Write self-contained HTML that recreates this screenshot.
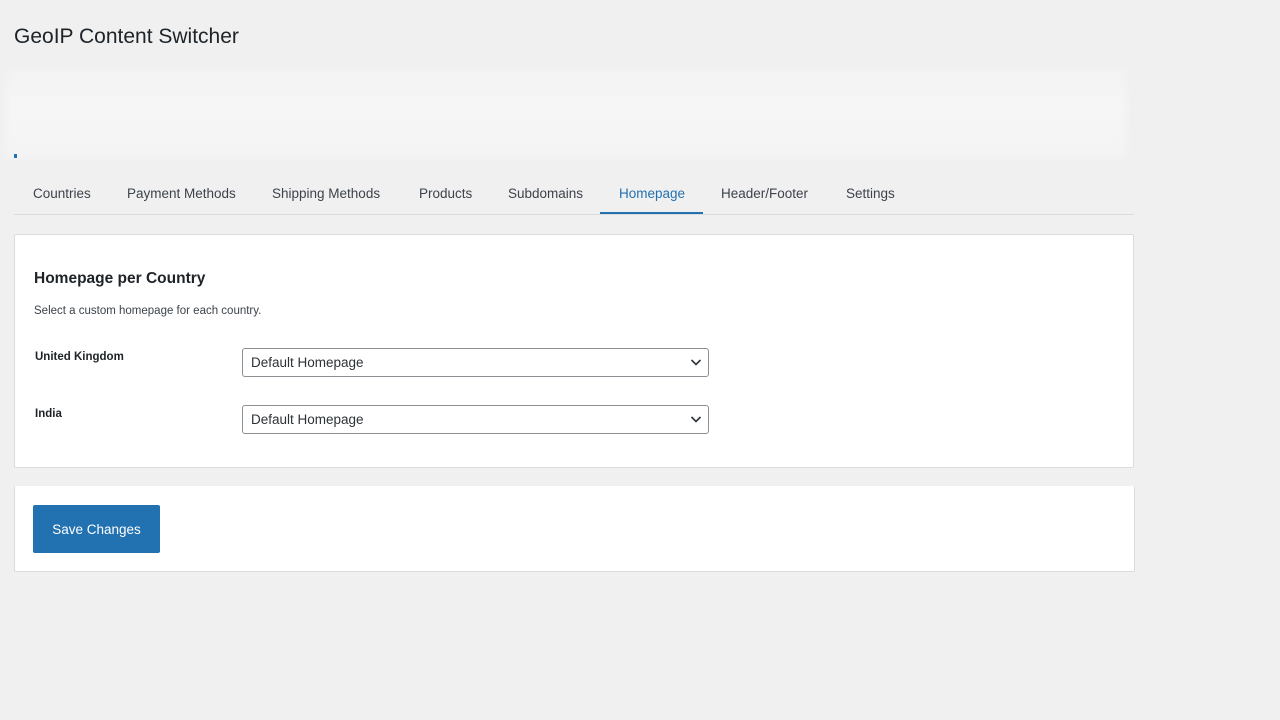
<!DOCTYPE html>
<html><head><meta charset="utf-8"><style>
body{margin:0;width:1280px;height:720px;background:#f0f0f1;font-family:"Liberation Sans",sans-serif;color:#1d2327;position:relative;overflow:hidden}
.a{position:absolute;white-space:nowrap}
.tab{position:absolute;top:186px;font-size:13.5px;color:#3c434a}
.sel{position:absolute;left:242px;width:465px;height:27px;border:1px solid #8c8f94;border-radius:3px;background:#fff;font-size:13.5px;color:#2c3338}
.sel span{position:absolute;left:8px;top:6px}
.sel svg{position:absolute;right:6px;top:8px}
</style></head><body>
<div class="a" style="left:14px;top:25px;font-size:21px;color:#1d2327">GeoIP Content Switcher</div>
<div class="a" style="left:6px;top:68px;width:1120px;height:90px;background:linear-gradient(180deg,#f2f2f2,#f6f6f6 40%,#f4f4f4);filter:blur(4px)"></div>
<div class="a" style="left:14px;top:154px;width:3px;height:4px;background:#2271b1"></div>
<div class="tab" style="left:33px">Countries</div>
<div class="tab" style="left:127px">Payment Methods</div>
<div class="tab" style="left:272px">Shipping Methods</div>
<div class="tab" style="left:419px">Products</div>
<div class="tab" style="left:508px">Subdomains</div>
<div class="tab" style="left:619px;color:#2271b1">Homepage</div>
<div class="tab" style="left:721px">Header/Footer</div>
<div class="tab" style="left:846px">Settings</div>
<div class="a" style="left:14px;top:214px;width:1120px;height:1px;background:#dcdcde"></div>
<div class="a" style="left:600px;top:212px;width:103px;height:2px;background:#2271b1"></div>
<div class="a" style="left:14px;top:234px;width:1118px;height:232px;background:#fff;border:1px solid #dcdcde;border-radius:2px"></div>
<div class="a" style="left:34px;top:270px;font-size:15.5px;font-weight:bold;color:#1d2327">Homepage per Country</div>
<div class="a" style="left:34px;top:305px;font-size:11.5px;color:#3c434a">Select a custom homepage for each country.</div>
<div class="a" style="left:35px;top:351px;font-size:11.5px;font-weight:bold;color:#1d2327">United Kingdom</div>
<div class="a" style="left:35px;top:408px;font-size:11.5px;font-weight:bold;color:#1d2327">India</div>
<div class="sel" style="top:348px"><span>Default Homepage</span><svg width="12" height="10" viewBox="0 0 12 10"><path d="M1.5 3 6 7.5 10.5 3" fill="none" stroke="#2c3338" stroke-width="1.6"/></svg></div>
<div class="sel" style="top:405px"><span>Default Homepage</span><svg width="12" height="10" viewBox="0 0 12 10"><path d="M1.5 3 6 7.5 10.5 3" fill="none" stroke="#2c3338" stroke-width="1.6"/></svg></div>
<div class="a" style="left:14px;top:486px;width:1119px;height:85px;background:#fff;border:1px solid #dcdcde;border-top:none;border-radius:2px"></div>
<div class="a" style="left:33px;top:505px;width:127px;height:48px;background:#2271b1;border-radius:2px;color:#fff;font-size:13.5px;text-align:center;line-height:49px">Save Changes</div>
</body></html>
